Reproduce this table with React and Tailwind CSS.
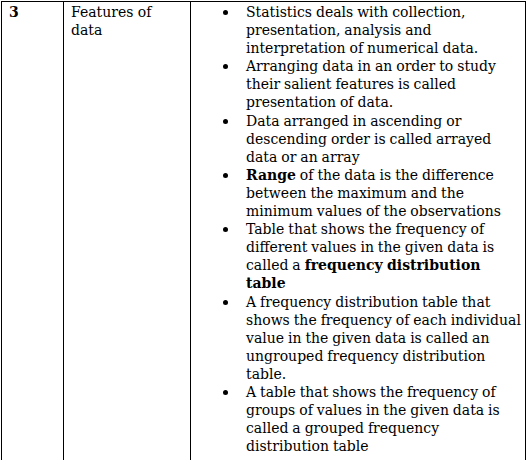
import React from "react";

const items = [
  [["Statistics deals with collection,"], ["presentation, analysis and"], ["interpretation of numerical data."]],
  [["Arranging data in an order to study"], ["their salient features is called"], ["presentation of data."]],
  [["Data arranged in ascending or"], ["descending order is called arrayed"], ["data or an array"]],
  [[<b key="b">Range</b>, " of the data is the difference"], ["between the maximum and the"], ["minimum values of the observations"]],
  [["Table that shows the frequency of"], ["different values in the given data is"], ["called a ", <b key="b">frequency distribution</b>], [<b key="b">table</b>]],
  [["A frequency distribution table that"], ["shows the frequency of each individual"], ["value in the given data is called an"], ["ungrouped frequency distribution"], ["table."]],
  [["A table that shows the frequency of"], ["groups of values in the given data is"], ["called a grouped frequency"], ["distribution table"]],
];

export default function App() {
  return (
    <div className="w-[528px] h-[460px] bg-white overflow-hidden text-black" style={{ fontFamily: '"DejaVu Serif", serif' }}>
      <div className="ml-[1px] mt-[1px] w-[525px] h-[459px] border-l border-t border-r border-black grid grid-cols-[62px_127px_1fr] text-[14px] leading-[18.1px]">
        <div className="border-r border-black pl-[7px] pt-[1px] font-bold">3</div>
        <div className="border-r border-black pl-[7px] pt-[1px]">
          <div>Features of</div>
          <div>data</div>
        </div>
        <div className="pt-[1px] [word-spacing:-0.5px]">
          {items.map((lines, i) => (
            <div key={i} className="flex">
              <div className="w-[55px] shrink-0 relative">
                <span className="absolute left-[32px] top-[7px] w-[5px] h-[5px] rounded-full bg-black"></span>
              </div>
              <div>
                {lines.map((l, j) => (
                  <div key={j} className="whitespace-nowrap">{l}</div>
                ))}
              </div>
            </div>
          ))}
        </div>
      </div>
    </div>
  );
}
